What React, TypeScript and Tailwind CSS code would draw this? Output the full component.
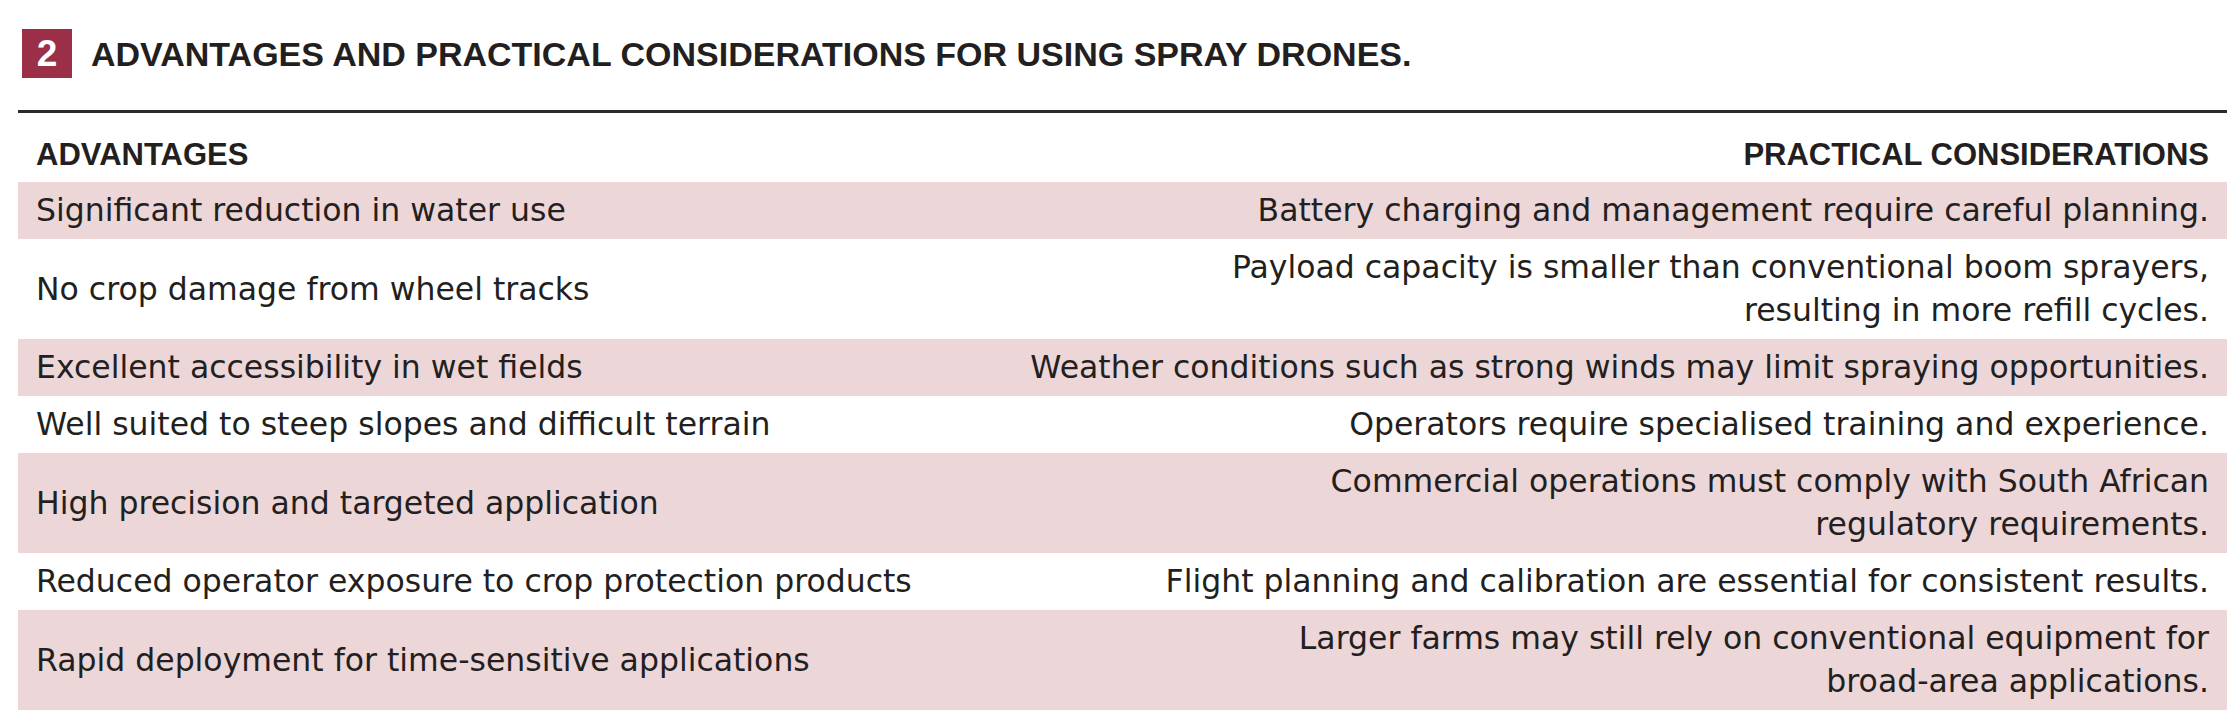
import React from "react";

const rows: { left: string; right: string[]; pink: boolean }[] = [
  { left: "Significant reduction in water use", right: ["Battery charging and management require careful planning."], pink: true },
  { left: "No crop damage from wheel tracks", right: ["Payload capacity is smaller than conventional boom sprayers,", "resulting in more refill cycles."], pink: false },
  { left: "Excellent accessibility in wet fields", right: ["Weather conditions such as strong winds may limit spraying opportunities."], pink: true },
  { left: "Well suited to steep slopes and difficult terrain", right: ["Operators require specialised training and experience."], pink: false },
  { left: "High precision and targeted application", right: ["Commercial operations must comply with South African", "regulatory requirements."], pink: true },
  { left: "Reduced operator exposure to crop protection products", right: ["Flight planning and calibration are essential for consistent results."], pink: false },
  { left: "Rapid deployment for time-sensitive applications", right: ["Larger farms may still rely on conventional equipment for", "broad-area applications."], pink: true },
];

export default function App() {
  return (
    <div className="w-[2240px] h-[720px] bg-white pl-[18px] pr-[13px] pt-[29px] text-[#231f20] overflow-hidden">
      <div className="flex items-center pl-[4px] h-[49px]">
        <div className="w-[50px] h-[49px] bg-[#9a2f47] flex items-center justify-center text-white font-bold text-[37px] leading-none" style={{ fontFamily: '"Liberation Sans", Arial, sans-serif' }}>
          2
        </div>
        <div className="ml-[19px] font-bold text-[34px] leading-none" style={{ fontFamily: '"Liberation Sans", Arial, sans-serif' }}>
          ADVANTAGES AND PRACTICAL CONSIDERATIONS FOR USING SPRAY DRONES.
        </div>
      </div>
      <div className="mt-[32px] h-[3px] bg-[#2a2a2a]" />
      <div className="flex justify-between px-[18px] pt-[26px] pb-[12px] font-bold text-[31px] leading-[31px]" style={{ fontFamily: '"Liberation Sans", Arial, sans-serif' }}>
        <span>ADVANTAGES</span>
        <span>PRACTICAL CONSIDERATIONS</span>
      </div>
      <div className="flex flex-col text-[31.5px] leading-[43px]" style={{ fontFamily: '"DejaVu Sans", sans-serif' }}>
        {rows.map((r, i) => (
          <div key={i} className={`flex items-center justify-between px-[18px] py-[7px] ${r.pink ? "bg-[#ecd6d8]" : "bg-white"}`}>
            <span className="whitespace-nowrap">{r.left}</span>
            <span className="text-right whitespace-nowrap">
              {r.right.map((line, j) => (
                <React.Fragment key={j}>
                  {j > 0 && <br />}
                  {line}
                </React.Fragment>
              ))}
            </span>
          </div>
        ))}
      </div>
    </div>
  );
}
